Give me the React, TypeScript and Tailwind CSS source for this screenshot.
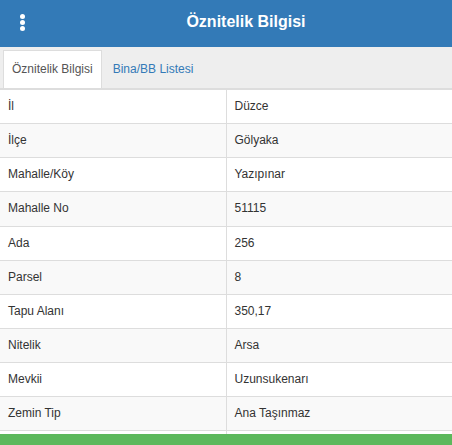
import React from 'react';

const rows: [string, string][] = [
  ['İl', 'Düzce'],
  ['İlçe', 'Gölyaka'],
  ['Mahalle/Köy', 'Yazıpınar'],
  ['Mahalle No', '51115'],
  ['Ada', '256'],
  ['Parsel', '8'],
  ['Tapu Alanı', '350,17'],
  ['Nitelik', 'Arsa'],
  ['Mevkii', 'Uzunsukenarı'],
  ['Zemin Tip', 'Ana Taşınmaz'],
  ['', ''],
];

const App: React.FC = () => {
  return (
    <div className="h-[445px] w-full overflow-hidden flex flex-col bg-white text-[12px] text-[#333] font-['Liberation_Sans',Arial,sans-serif]">
      {/* header */}
      <div className="h-[47px] shrink-0 bg-[#337ab7] flex items-center pb-[3px]">
        <div className="w-[40px] flex justify-center pl-[4px]">
          <div className="flex flex-col gap-[1px]">
            <span className="w-[5px] h-[5px] rounded-full bg-white" />
            <span className="w-[5px] h-[5px] rounded-full bg-white" />
            <span className="w-[5px] h-[5px] rounded-full bg-white" />
          </div>
        </div>
        <div className="flex-1 text-center text-white text-[16px] font-bold">Öznitelik Bilgisi</div>
      </div>

      {/* tabs */}
      <div className="shrink-0 bg-[#eeeeee] pt-[3px] pl-[3px] flex border-b border-[#ddd]">
        <div className="bg-white border border-b-0 border-[#ddd] px-[8px] py-[10px] leading-[17px] text-[#555]">
          Öznitelik Bilgisi
        </div>
        <div className="ml-[2px] px-[8px] py-[10px] leading-[17px] text-[#337ab7] border border-transparent border-b-0">
          Bina/BB Listesi
        </div>
      </div>

      {/* table */}
      <div className="flex-1 overflow-hidden">
        <table className="w-full border-collapse table-fixed">
          <tbody>
            {rows.map(([k, v], i) => (
              <tr key={i} className={i % 2 === 1 ? 'bg-[#f9f9f9]' : 'bg-white'}>
                <td className="w-1/2 border-t border-[#ddd] p-[8px] leading-[1.42857]">{k || '\u00a0'}</td>
                <td className="w-1/2 border-t border-l border-[#ddd] p-[8px] leading-[1.42857]">{v || '\u00a0'}</td>
              </tr>
            ))}
          </tbody>
        </table>
      </div>

      {/* bottom button */}
      <div className="h-[11px] shrink-0 bg-[#5cb85c]" />
    </div>
  );
};

export default App;
